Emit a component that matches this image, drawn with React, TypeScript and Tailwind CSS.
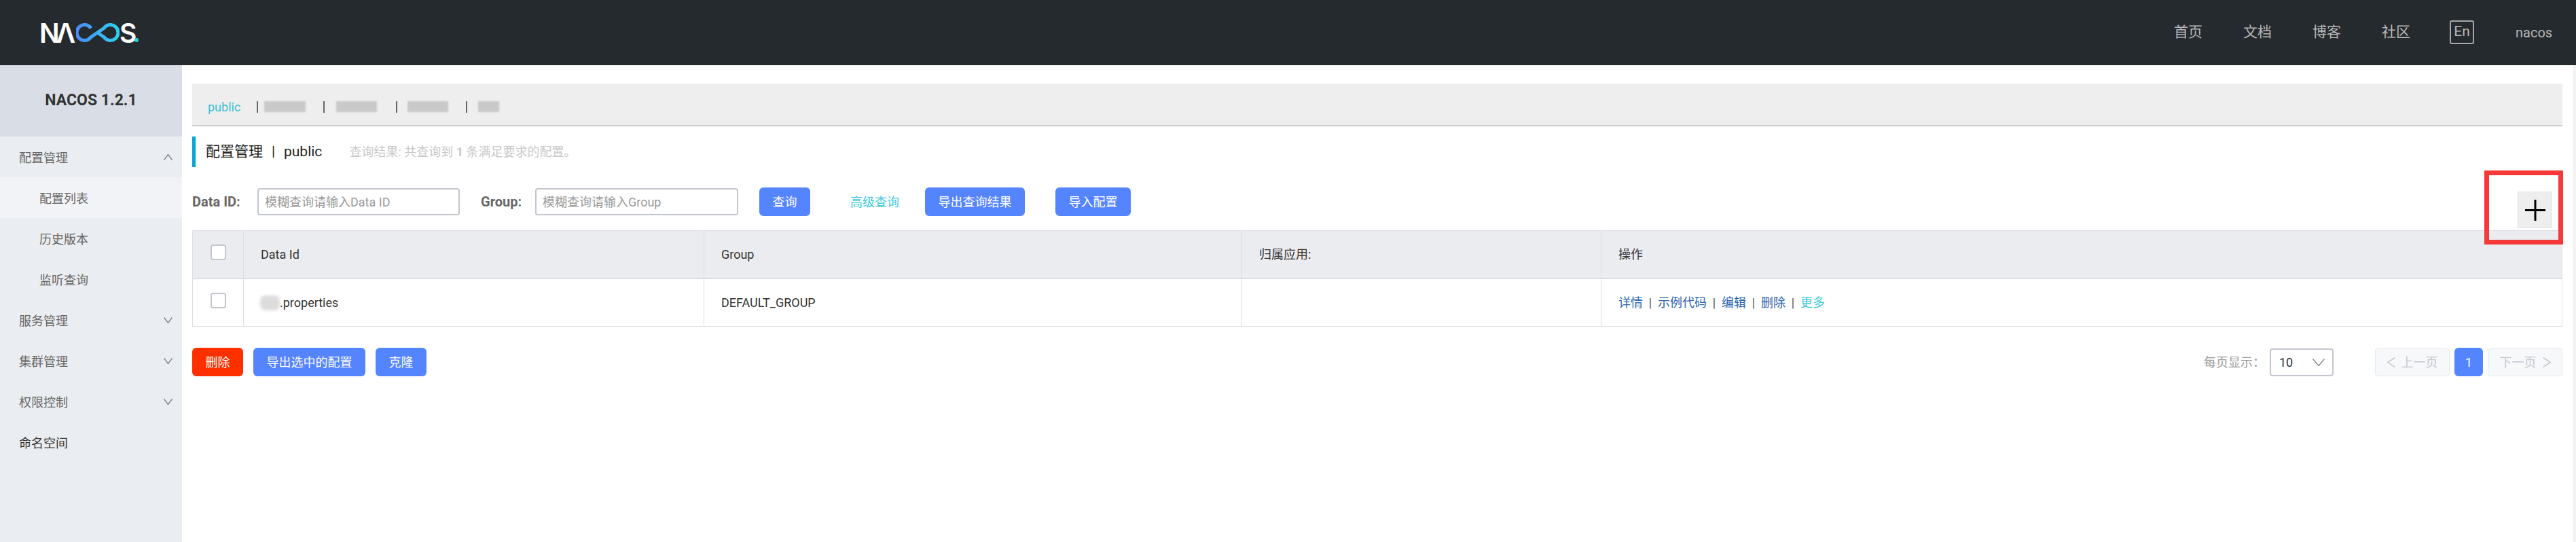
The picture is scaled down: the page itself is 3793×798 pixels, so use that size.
import React from "react";

const font = "font-['Roboto','Noto_Sans_CJK_SC',sans-serif]";

const navLinks = ["首页", "文档", "博客", "社区"];

// thin chevrons, the icon packages' ones are too small for these boxes
const Chevron = ({ dir, w, h, className }: { dir: "up" | "down" | "left" | "right"; w: number; h: number; className?: string }) => {
  const points = {
    up: `0.5,${h - 0.5} ${w / 2},0.5 ${w - 0.5},${h - 0.5}`,
    down: `0.5,0.5 ${w / 2},${h - 0.5} ${w - 0.5},0.5`,
    left: `${w - 0.5},0.5 0.5,${h / 2} ${w - 0.5},${h - 0.5}`,
    right: `0.5,0.5 ${w - 0.5},${h / 2} 0.5,${h - 0.5}`,
  }[dir];
  return (
    <svg width={w} height={h} viewBox={`0 0 ${w} ${h}`} fill="none" className={className}>
      <polyline points={points} stroke="currentColor" strokeWidth="1.5" />
    </svg>
  );
};

const Logo = () => (
  <div className="flex items-center h-[28px] ml-[58px] font-['Inter',sans-serif] font-semibold text-white text-[39px] leading-none">
    <span className="w-[24px]">N</span>
    <span className="w-[30px] text-center">Λ</span>
    <svg width="64" height="28" viewBox="0 0 64 28" fill="none">
      <defs>
        <linearGradient id="inf" x1="0" y1="0" x2="1" y2="0">
          <stop offset="0" stopColor="#4a8cf7" />
          <stop offset="1" stopColor="#2fd0ec" />
        </linearGradient>
      </defs>
      <path
        d="M22 7.5 A11.5 11.5 0 1 0 22 20.5 L41 7.5 A11.5 11.5 0 1 1 41 20.5 L31.5 14"
        stroke="url(#inf)"
        strokeWidth="5"
      />
    </svg>
    <span className="w-[20px]">S</span>
    <span className="w-[6px] h-[6px] rounded-full bg-[#27d3e2] self-end ml-[2px]" />
  </div>
);

const Header = () => (
  <div className="h-[96px] shrink-0 bg-[#252a2f] flex items-center justify-between">
    <Logo />
    <div className="flex items-center text-[#b8b8b8] pr-[40px] h-full">
      {navLinks.map((l) => (
        <span key={l} className="text-[21px] mr-[60px]">
          {l}
        </span>
      ))}
      <span className="w-[36px] h-[35px] border-2 border-[#a8a8a8] rounded-[3px] flex items-center justify-center text-[21px] mr-[61px] -ml-[2px] -mt-[2px]">
        En
      </span>
      <span className="text-[20px] w-[49px]">nacos</span>
    </div>
  </div>
);

const MenuItem = ({ label, sub, active, open, dark, arrow }: { label: string; sub?: boolean; active?: boolean; open?: boolean; dark?: boolean; arrow?: boolean }) => (
  <div
    className={`h-[60px] flex items-center justify-between pr-[14px] text-[18px] ${sub ? "pl-[58px]" : "pl-[28px]"} ${active ? "bg-[#f2f3f7]" : ""} ${dark ? "text-[#333]" : "text-[#666]"}`}
  >
    <span className="pt-[3px]">{label}</span>
    {arrow && <Chevron dir={open ? "up" : "down"} w={13} h={9} className="text-[#888]" />}
  </div>
);

const Sidebar = () => (
  <div className="w-[268px] shrink-0 bg-[#eaedf1]">
    <div className="h-[105px] bg-[#d9dee6] flex items-center justify-center font-bold text-[23px] text-[#333]">NACOS 1.2.1</div>
    <MenuItem label="配置管理" arrow open />
    <MenuItem label="配置列表" sub active />
    <MenuItem label="历史版本" sub />
    <MenuItem label="监听查询" sub />
    <MenuItem label="服务管理" arrow />
    <MenuItem label="集群管理" arrow />
    <MenuItem label="权限控制" arrow />
    <MenuItem label="命名空间" dark />
  </div>
);

const Btn = ({ children, w, red }: { children: React.ReactNode; w: string; red?: boolean }) => (
  <button className={`h-[42px] rounded-[6px] text-white text-[18px] ${w} ${red ? "bg-[#ff3000]" : "bg-[#5584ff]"}`}>{children}</button>
);

const Check = () => <span className="block -mt-[6px] w-[23px] h-[23px] bg-white border-2 border-[#c4c6cf] rounded-[4px]" />;

const Blur = ({ w }: { w: string }) => <span className={`block h-[16px] bg-[#c9c9c9] blur-[1px] ${w}`} />;

const Sep = ({ className }: { className?: string }) => <span className={`w-[2px] h-[17px] bg-[#666] ${className ?? ""}`} />;

const TabsBar = () => (
  <div className="h-[63px] bg-[#eeeeee] border-b-2 border-[#cccccc] flex items-center pl-[23px] pt-[7px] text-[18px]">
    <span className="text-[#3cbfd4] w-[72px]">public</span>
    <Sep />
    <Blur w="w-[61px] ml-[9px]" />
    <Sep className="ml-[26px]" />
    <Blur w="w-[60px] ml-[17px]" />
    <Sep className="ml-[28px]" />
    <Blur w="w-[60px] ml-[15px]" />
    <Sep className="ml-[26px]" />
    <Blur w="w-[31px] ml-[16px]" />
  </div>
);

const Title = () => (
  <div className="mt-[15px] h-[45px] border-l-[5px] border-[#09a4cf] pl-[15px] flex items-center text-[21px] text-[#222]">
    <span>配置管理</span>
    <span className="w-[31px] text-center">|</span>
    <span>public</span>
    <span className="ml-[40px] text-[18px] text-[#c9c9c9]">
      查询结果: 共查询到 <b>1</b> 条满足要求的配置。
    </span>
  </div>
);

const Filters = () => (
  <div className="mt-[30px] h-[42px] flex items-center text-[18px]">
    <b className="w-[96px] text-[20px] text-[#666]">Data ID:</b>
    <div className="w-[298px] h-[40px] border-2 border-[#c4c6cf] rounded-[4px] flex items-center pl-[9px] text-[#999]">模糊查询请输入Data ID</div>
    <b className="ml-[31px] w-[80px] text-[20px] text-[#666]">Group:</b>
    <div className="w-[299px] h-[40px] border-2 border-[#c4c6cf] rounded-[4px] flex items-center pl-[9px] text-[#999]">模糊查询请输入Group</div>
    <div className="ml-[31px]">
      <Btn w="w-[75px]">查询</Btn>
    </div>
    <span className="ml-[59px] text-[#3cc8dc]">高级查询</span>
    <div className="ml-[38px]">
      <Btn w="w-[147px]">导出查询结果</Btn>
    </div>
    <div className="ml-[45px]">
      <Btn w="w-[111px]">导入配置</Btn>
    </div>
  </div>
);

const ActionSep = () => <span className="w-[22px] text-center text-[#555]">|</span>;

const Table = () => (
  <div className="mt-[21px] border border-[#dcdee3] text-[18px] text-[#333]">
    <div className="h-[71px] bg-[#ebecf0] border-b-2 border-[#dcdee3] flex items-stretch">
      <div className="w-[75px] border-r border-[#dcdee3] flex items-center justify-center">
        <Check />
      </div>
      <div className="w-[678px] border-r border-[#dcdee3] flex items-center pl-[25px]">Data Id</div>
      <div className="w-[792px] border-r border-[#dcdee3] flex items-center pl-[25px]">Group</div>
      <div className="w-[529px] border-r border-[#dcdee3] flex items-center pl-[25px]">归属应用:</div>
      <div className="flex-1 flex items-center pl-[25px]">操作</div>
    </div>
    <div className="h-[69px] flex items-stretch">
      <div className="w-[75px] border-r border-[#dcdee3] flex items-center justify-center">
        <Check />
      </div>
      <div className="w-[678px] border-r border-[#dcdee3] flex items-center pl-[24px]">
        <span className="block w-[29px] h-[22px] bg-[#dcdcdc] rounded-[8px] blur-[2px]" />
        <span>.properties</span>
      </div>
      <div className="w-[792px] border-r border-[#dcdee3] flex items-center pl-[25px]">DEFAULT_GROUP</div>
      <div className="w-[529px] border-r border-[#dcdee3]" />
      <div className="flex-1 flex items-center pl-[25px] text-[#2a63b0]">
        <span>详情</span>
        <ActionSep />
        <span>示例代码</span>
        <ActionSep />
        <span>编辑</span>
        <ActionSep />
        <span>删除</span>
        <ActionSep />
        <span className="text-[#3cc8dc]">更多</span>
      </div>
    </div>
  </div>
);

const Footer = () => (
  <div className="mt-[31px] flex items-center justify-between">
    <div className="flex gap-[15px]">
      <Btn w="w-[75px]" red>删除</Btn>
      <Btn w="w-[165px]">导出选中的配置</Btn>
      <Btn w="w-[75px]">克隆</Btn>
    </div>
    <div className="flex items-center text-[18px]">
      <span className="text-[#999] w-[97px]">每页显示：</span>
      <div className="w-[94px] h-[41px] border-2 border-[#c4c6cf] rounded-[4px] flex items-center justify-between pl-[12px] pr-[11px] text-[#333]">
        10
        <Chevron dir="down" w={18} h={11} className="text-[#888]" />
      </div>
      <div className="ml-[61px] w-[110px] h-[41px] bg-[#f7f8fa] border border-[#e6e7eb] rounded-[4px] flex items-center justify-center text-[#c4c6cf]">
        <Chevron dir="left" w={12} h={15} />
        <span className="ml-[9px]">上一页</span>
      </div>
      <div className="ml-[7px] w-[42px] h-[42px] bg-[#5584ff] rounded-[6px] flex items-center justify-center text-white">1</div>
      <div className="ml-[7px] w-[110px] h-[41px] bg-[#f7f8fa] border border-[#e6e7eb] rounded-[4px] flex items-center justify-center text-[#c4c6cf]">
        <span className="mr-[9px]">下一页</span>
        <Chevron dir="right" w={12} h={15} />
      </div>
    </div>
  </div>
);

export default function App() {
  return (
    <div className={`h-[798px] w-[3793px] overflow-hidden flex flex-col bg-white ${font}`}>
      <Header />
      <div className="flex flex-1 relative">
        <Sidebar />
        <div className="flex-1 pt-[27px] pl-[15px] pr-[15px] border-r-[5px] border-[#f4f4f4]">
          <TabsBar />
          <Title />
          <Filters />
          <Table />
          <Footer />
        </div>
        {/* floating add button, with the red annotation box on top */}
        <div className="absolute left-[3707px] top-[186px] w-[51px] h-[54px] bg-[#eeeeee] border border-[#e4e4e4] flex items-center justify-center">
          <svg width="30" height="31" viewBox="0 0 30 31">
            <path d="M0 15.5H30M15 0V31" stroke="#000" strokeWidth="3" />
          </svg>
        </div>
        <div className="absolute left-[3658px] top-[155px] w-[116px] h-[109px] border-[7px] border-[#f73838]" />
      </div>
    </div>
  );
}
